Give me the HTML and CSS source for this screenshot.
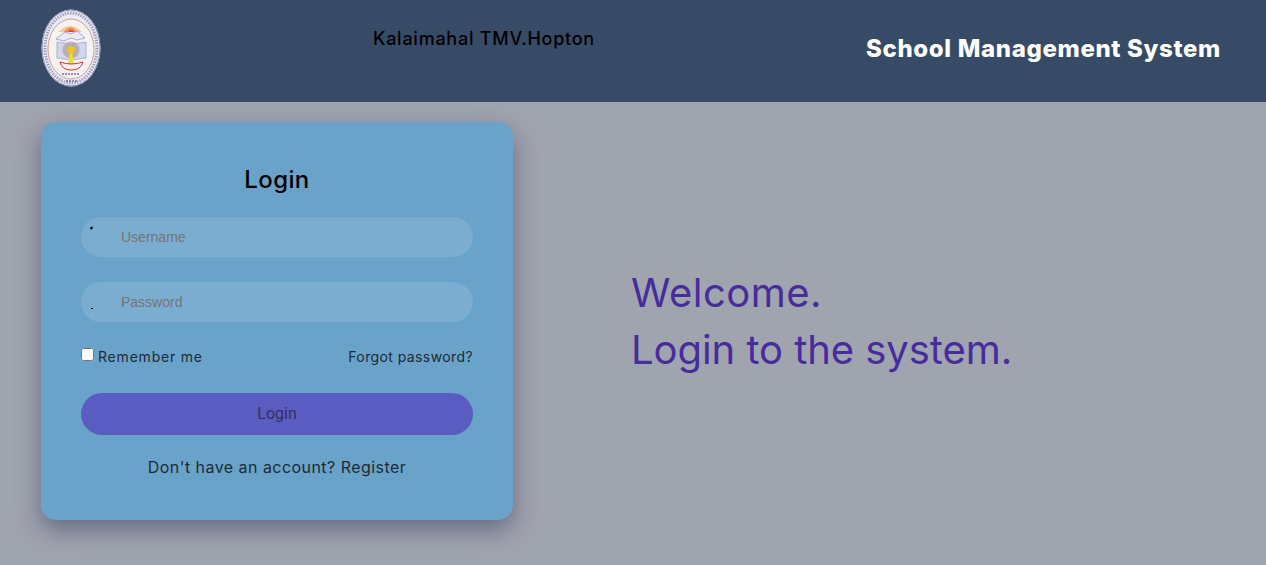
FILE: index.html
```html
<!DOCTYPE html>
<html lang="en">
<head>
    <meta charset="UTF-8">
    <meta name="viewport" content="width=device-width, initial-scale=1.0">
    <title>School Management System</title>
    <link rel="stylesheet" href="styles.css">
</head>
<body>

<div class="header">
    <svg class="logo" width="60" height="78" viewBox="0 0 60 78">
        <ellipse cx="30" cy="39" rx="29.5" ry="38.5" fill="#eceaf2"/>
        <ellipse cx="30" cy="39" rx="29" ry="38" fill="none" stroke="#8a8cb8" stroke-width="1"/>
        <ellipse cx="30" cy="39" rx="26" ry="35" fill="none" stroke="#7678a8" stroke-width="3" stroke-dasharray="1.5 1.2" opacity="0.65"/>
        <ellipse cx="30" cy="40" rx="23" ry="30" fill="#f5f2f1" stroke="#c58a76" stroke-width="0.8"/>
        <path d="M17 23 Q30 11 41 23 Z" fill="#f6c79c"/>
        <path d="M23 23 Q30 14 36 23 Z" fill="#ee8a4a"/>
        <path d="M27 23 Q30 19 33 23 Z" fill="#e2403a"/>
        <path d="M15 30 L24 23 L30 25 L36 22 L44 29 L36 31 L30 29 L23 32 Z" fill="#ecebf5" stroke="#8d8cc0" stroke-width="0.7"/>
        <path d="M16 33 L29 35 L29 51 L16 49 Z" fill="#d3d6ea" stroke="#9a9cc6" stroke-width="0.7"/>
        <path d="M45 33 L31 35 L31 51 L45 49 Z" fill="#d3d6ea" stroke="#9a9cc6" stroke-width="0.7"/>
        <circle cx="30" cy="41" r="8.5" fill="#a9a4a8" opacity="0.75"/>
        <path d="M28.7 44 L31.3 44 L32.5 55 L27.5 55 Z" fill="#f6e01c"/>
        <circle cx="30" cy="41" r="3.8" fill="#f4c21a"/>
        <path d="M19 53 Q30 57 42 53 Q40 61 30 61 Q21 61 19 53 Z" fill="#fbf3f3" stroke="#d8322f" stroke-width="1"/>
        <path d="M21 65 H39" stroke="#6f72a8" stroke-width="1.4" stroke-dasharray="2 1"/>
        <path d="M25 72 H36" stroke="#6f72a8" stroke-width="1.4" stroke-dasharray="2 1"/>
    </svg>
    <div class="school-name">Kalaimahal TMV.Hopton</div>
    <div class="system-name">School Management System</div>
</div>

<div class="main">
    <div class="login-card">
        <h2 class="login-title">Login</h2>
        <div class="field">
            <span class="icon-mark icon-user"></span>
            <input type="text" class="field-input" placeholder="Username">
        </div>
        <div class="field">
            <span class="icon-mark icon-lock"></span>
            <input type="password" class="field-input" placeholder="Password">
        </div>
        <div class="options">
            <label class="remember"><input type="checkbox" class="remember-box">Remember me</label>
            <a href="#" class="link forgot">Forgot password?</a>
        </div>
        <button class="login-button">Login</button>
        <p class="register">Don't have an account? <a href="#" class="link">Register</a></p>
    </div>
    <div class="welcome">
        <div class="welcome-first">Welcome.</div>
        <div class="welcome-second">Login to the system.</div>
    </div>
</div>

</body>
</html>
```

FILE: styles.css
```css
* {
    box-sizing: border-box;
}

body {
    background-color: #a0a4af;
    font-family: Inter, "Open Sans", sans-serif;
    margin: 0;
    padding: 0;
    height: 565px;
    overflow: hidden;
}

.header {
    background-color: #374b66;
    height: 102px;
    display: flex;
    align-items: flex-start;
    padding: 9px 45px 0 41px;
}

.logo {
    flex: none;
}

.school-name {
    margin: 18px 0 0 272px;
    font-size: 18px;
    font-weight: 500;
    line-height: 24px;
    color: #000;
    letter-spacing: 0.75px;
}

.system-name {
    margin: 25px 0 0 auto;
    font-size: 24px;
    font-weight: 800;
    line-height: 30px;
    color: #fff;
    letter-spacing: 0.65px;
}

.main {
    display: flex;
    align-items: flex-start;
    padding: 20px 0 0 41px;
}

.login-card {
    width: 472px;
    height: 398px;
    flex: none;
    background-color: #6aa3c9;
    border-radius: 15px;
    box-shadow: 0 10px 25px rgba(50, 50, 90, 0.5);
    padding: 40px 40px 0;
}

.login-title {
    margin: 0 0 20px;
    font-size: 24px;
    font-weight: 500;
    line-height: 35px;
    color: #000;
    text-align: center;
    letter-spacing: 0.4px;
}

.field {
    position: relative;
    margin-bottom: 25px;
}

.field-input {
    display: block;
    width: 100%;
    height: 40px;
    border: none;
    border-radius: 20px;
    background-color: #7aadd0;
    padding: 0 40px;
    font-family: "Liberation Sans", Arial, sans-serif;
    font-size: 14px;
    outline: none;
}

.field-input::placeholder {
    color: #757575;
}

/* clipped icon remains at the left of each input */
.icon-mark {
    position: absolute;
    z-index: 1;
    height: 1px;
    background-color: #000;
}

.icon-user {
    left: 9px;
    top: 10px;
    width: 3px;
    height: 2px;
    transform: rotate(-45deg);
}

.icon-lock {
    left: 10px;
    top: 26px;
    width: 2px;
}

.options {
    display: flex;
    justify-content: space-between;
    align-items: center;
    height: 20px;
    margin-top: -1px;
    font-size: 14px;
    color: #1f2937;
}

.remember {
    display: flex;
    align-items: center;
    letter-spacing: 0.8px;
}

.remember-box {
    width: 13px;
    height: 13px;
    margin: 0 4px 3px 0;
}

.link {
    color: #1f2937;
    text-decoration: none;
}

.forgot {
    letter-spacing: 0.4px;
}

.login-button {
    display: block;
    width: 100%;
    height: 42px;
    margin-top: 27px;
    padding: 0 0 2px;
    border: none;
    border-radius: 21px;
    background-color: #5a5cc1;
    color: #352e5e;
    font-family: Roboto, sans-serif;
    font-size: 16px;
}

.register {
    margin: 20px 0 0;
    font-size: 16px;
    line-height: 24px;
    color: #1f2937;
    text-align: center;
    letter-spacing: 0.45px;
}

.welcome {
    margin: 142px 0 0 118px;
    font-size: 40px;
    line-height: 57px;
    color: #472d9b;
}

.welcome-first {
    letter-spacing: 0.5px;
}

.welcome-second {
    letter-spacing: -0.05px;
}
```
